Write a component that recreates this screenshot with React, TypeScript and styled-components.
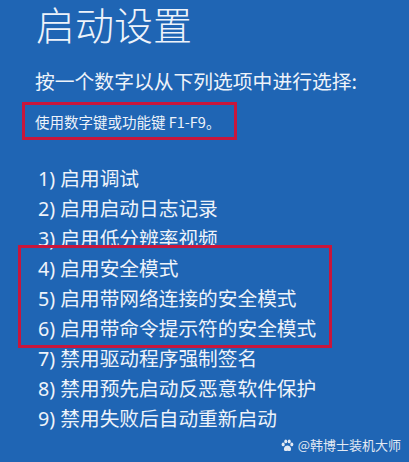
import React from "react";
import styled, { createGlobalStyle } from "styled-components";

const Global = createGlobalStyle`
  html, body { margin: 0; padding: 0; background: #1f65b4; }
  body { font-family: "Noto Sans", "Noto Sans CJK SC", sans-serif; }
`;

const Page = styled.div`
  width: 409px;
  height: 462px;
  background: #1f65b4;
  color: #eef3fa;
  box-sizing: border-box;
  display: flex;
  flex-direction: column;
`;

const Title = styled.h1`
  margin: 0 0 0 36px;
  font-family: "Noto Sans CJK SC", sans-serif;
  font-weight: 300;
  font-size: 39px;
  line-height: 46px;
`;

const Subtitle = styled.div`
  margin: 21px 0 0 35px;
  font-family: "Noto Sans CJK SC", sans-serif;
  font-size: 19.8px;
  line-height: 28px;
`;

const HintBox = styled.div`
  margin: 7px 0 0 22px;
  width: 215px;
  height: 38px;
  box-sizing: border-box;
  border: 3px solid #c8163c;
  display: flex;
  align-items: center;
  padding-left: 10px;
  font-family: "Noto Sans CJK SC", sans-serif;
  font-size: 14.5px;
`;

const List = styled.ol`
  list-style: none;
  margin: 24px 0 0 0;
  padding: 0;
  display: flex;
  flex-direction: column;
`;

const Item = styled.li`
  flex: none;
  padding-left: 38px;
  height: 30px;
  line-height: 30px;
  font-size: 19.7px;
  white-space: nowrap;
`;

const Highlight = styled.div`
  flex: none;
  margin: -9px 0 -4px 18px;
  width: 314px;
  box-sizing: border-box;
  border: 3px solid #c8163c;
  padding: 6px 0 1px 0;
  & > ${Item} {
    padding-left: 17px;
  }
`;

const Footer = styled.div`
  margin-top: auto;
  margin-bottom: 9px;
  display: flex;
  justify-content: flex-end;
  align-items: center;
  gap: 4px;
  padding-right: 8px;
  font-family: "Noto Sans CJK SC", sans-serif;
  font-size: 13px;
  line-height: 16px;
  color: #e2e9f3;
`;

const Paw = () => (
  <svg width="13" height="13" viewBox="0 0 12 12" fill="#e2e9f3">
    <ellipse cx="2" cy="5" rx="1.4" ry="1.7" />
    <ellipse cx="4.4" cy="2.2" rx="1.4" ry="1.8" />
    <ellipse cx="7.6" cy="2.2" rx="1.4" ry="1.8" />
    <ellipse cx="10" cy="5" rx="1.4" ry="1.7" />
    <path d="M6 6 C8.5 6 10 9 9 10.5 C8 11.5 7 10.8 6 10.8 C5 10.8 4 11.5 3 10.5 C2 9 3.5 6 6 6 Z" />
  </svg>
);

const items = [
  "1) 启用调试",
  "2) 启用启动日志记录",
  "3) 启用低分辨率视频",
  "4) 启用安全模式",
  "5) 启用带网络连接的安全模式",
  "6) 启用带命令提示符的安全模式",
  "7) 禁用驱动程序强制签名",
  "8) 禁用预先启动反恶意软件保护",
  "9) 禁用失败后自动重新启动",
];

export default function App() {
  return (
    <>
      <Global />
      <Page>
        <Title>启动设置</Title>
        <Subtitle>按一个数字以从下列选项中进行选择:</Subtitle>
        <HintBox>使用数字键或功能键 F1-F9。</HintBox>
        <List>
          {items.slice(0, 3).map((t) => (
            <Item key={t}>{t}</Item>
          ))}
          <Highlight>
            {items.slice(3, 6).map((t) => (
              <Item key={t}>{t}</Item>
            ))}
          </Highlight>
          {items.slice(6).map((t) => (
            <Item key={t}>{t}</Item>
          ))}
        </List>
        <Footer>
          <Paw />
          <span>@韩博士装机大师</span>
        </Footer>
      </Page>
    </>
  );
}
